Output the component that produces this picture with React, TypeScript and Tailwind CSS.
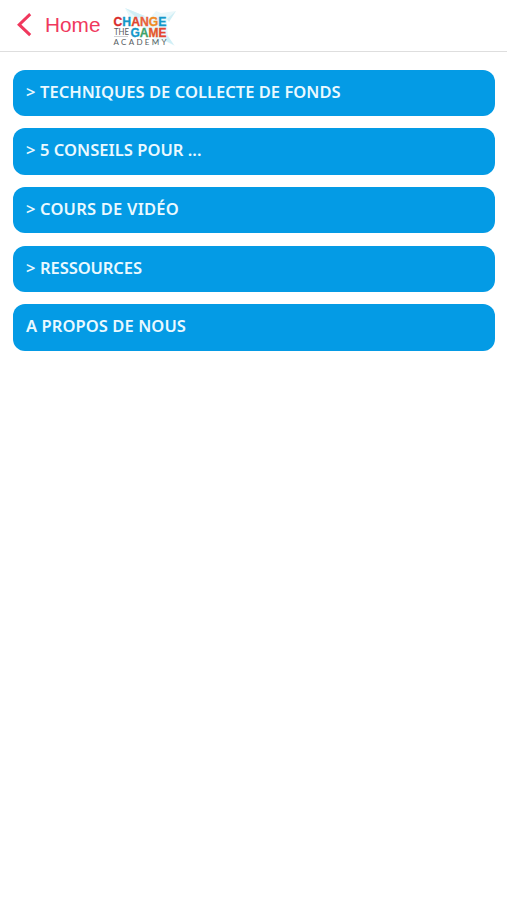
type MenuItem = {
  label: string;
  nested: boolean;
  tracking: string;
};

const items: MenuItem[] = [
  { label: "TECHNIQUES DE COLLECTE DE FONDS", nested: true, tracking: "tracking-[0.03px]" },
  { label: "5 CONSEILS POUR ...", nested: true, tracking: "tracking-[0.04px]" },
  { label: "COURS DE VIDÉO", nested: true, tracking: "tracking-[0.22px]" },
  { label: "RESSOURCES", nested: true, tracking: "tracking-[-0.08px]" },
  { label: "A PROPOS DE NOUS", nested: false, tracking: "tracking-[0.08px]" },
];

function Logo() {
  return (
    <svg width="68" height="44" viewBox="0 0 68 44" className="shrink-0" aria-label="Change the Game Academy">
      <path d="M15 2 L32 9 L40 12 L46 5 L51 7 L66 5 L57 15 L58 32 L65 40 L53 34 L42 40 L45 30 L32 20 L20 12 Z" fill="#eaf8fb" />
      <path d="M15 2 L35 10 L27 12 Z M58 30 L64 39 L54 34 Z M57 13 L66 5 L59 16 Z" fill="#d0eff6" />
      <g fontFamily="Liberation Sans, sans-serif" fontWeight="700" fontSize="12" strokeWidth="0.3">
        <text x="3.5" y="20" textLength="53" lengthAdjust="spacingAndGlyphs">
          <tspan fill="#d92b2b" stroke="#d92b2b">C</tspan>
          <tspan fill="#1497c9" stroke="#1497c9">H</tspan>
          <tspan fill="#e0452f" stroke="#e0452f">A</tspan>
          <tspan fill="#e9603a" stroke="#e9603a">N</tspan>
          <tspan fill="#f08a24" stroke="#f08a24">G</tspan>
          <tspan fill="#1497c9" stroke="#1497c9">E</tspan>
        </text>
        <text x="20.5" y="30.5" textLength="36" lengthAdjust="spacingAndGlyphs">
          <tspan fill="#1497c9" stroke="#1497c9">G</tspan>
          <tspan fill="#3fa36a" stroke="#3fa36a">A</tspan>
          <tspan fill="#e4572b" stroke="#e4572b">M</tspan>
          <tspan fill="#e4442f" stroke="#e4442f">E</tspan>
        </text>
      </g>
      <g fontFamily="Lato, sans-serif" fill="#555c60">
        <text x="4" y="28.8" fontSize="9" textLength="15" lengthAdjust="spacingAndGlyphs">THE</text>
        <text x="3.5" y="39" fontSize="8" textLength="53" lengthAdjust="spacing">ACADEMY</text>
      </g>
      <path d="M4 30.5 H18" stroke="#b9bcbe" strokeWidth="0.7" />
    </svg>
  );
}

export default function App() {
  return (
    <div className="min-h-[900px] w-full bg-white">
      <header className="flex h-[52px] items-start border-b border-[#dedede]">
        <a href="#" className="flex h-[50px] items-center pl-[17px] text-[#f0385d]">
          <svg width="15" height="24" viewBox="0 0 15 24">
            <path d="M13.2 1.2 L2.2 11.7 L13.2 22.2" fill="none" stroke="currentColor" strokeWidth="3" />
          </svg>
          <span className="ml-[13px] w-[56px] font-['Liberation_Sans',sans-serif] text-[20.8px] leading-[24px]">Home</span>
        </a>
        <div className="ml-[9px] mt-[6px]">
          <Logo />
        </div>
      </header>
      <nav className="flex flex-col gap-[12.2px] pt-[17.5px] pr-[12.5px] pl-[13px]">
        {items.map((item) => (
          <a
            key={item.label}
            href="#"
            className="flex h-[46.5px] items-center rounded-[12px] bg-[#049be5] pb-[1.6px] pl-[13px] font-['Noto_Sans',sans-serif] text-[16.5px] font-semibold whitespace-nowrap text-[#eaf9ff]"
          >
            {item.nested && <span className="w-[14px]">&gt;</span>}
            <span className={item.tracking}>{item.label}</span>
          </a>
        ))}
      </nav>
    </div>
  );
}
